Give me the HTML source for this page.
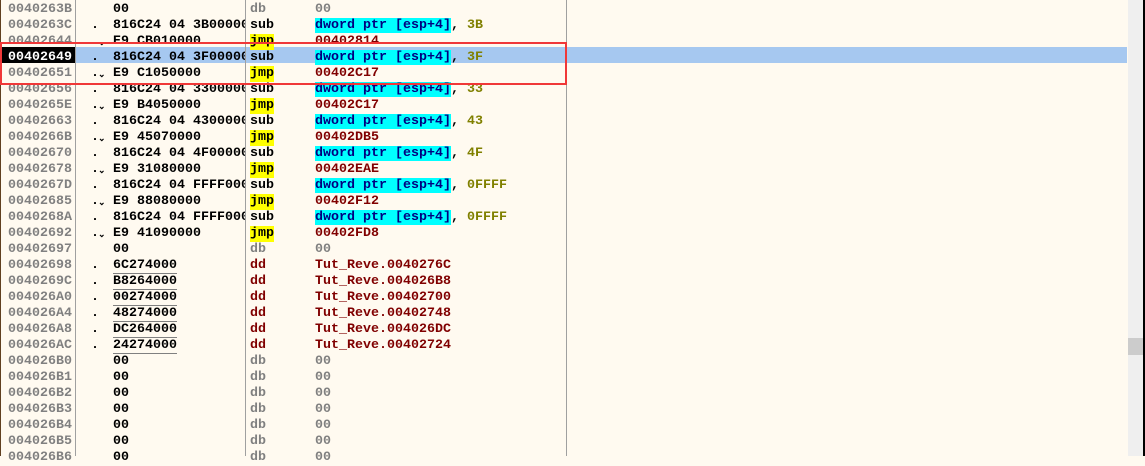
<!DOCTYPE html><html><head><meta charset="utf-8"><style>
body{margin:0;width:1145px;height:456px;overflow:hidden;background:#FFFAF0;position:relative;font:bold 13.33px "Liberation Mono",monospace;}
.r{position:absolute;left:0;width:1127px;height:16px;line-height:16px;white-space:pre}
.r span{position:absolute;top:3px}
.a{left:8px;color:#808080}
.d{left:91px;color:#000}
.d i{font-style:normal;font-size:9px;position:relative;left:-1px;top:1px}
.h{left:113px;color:#000;width:132px;overflow:hidden}
.m{left:250px;color:#000}
.o{left:315px;color:#000}
.g{color:#808080!important}
.y{background:#FFFF00}
.c{background:#00FFFF;color:#000080}
.ol{color:#808000}
.dr{color:#800000!important}
.u{border-bottom:1px solid #808080;display:inline-block;line-height:14px}
.v{position:absolute;top:0;width:1px;height:456px;background:#a0a0a0}
</style></head><body>
<div style="position:absolute;left:0;top:47px;width:1127px;height:16px;background:#A6C8F0"></div>
<div style="position:absolute;left:0;top:47px;width:75px;height:16px;background:#000"></div>
<div class="v" style="left:75px"></div><div class="v" style="left:245px"></div><div class="v" style="left:566px"></div>
<div style="position:absolute;left:0;top:0;width:1px;height:456px;background:#604020"></div>
<div style="position:absolute;left:1128px;top:0;width:15px;height:456px;background:#EFEFEF"></div>
<div style="position:absolute;left:1128px;top:338px;width:15px;height:17px;background:#CCCCCC"></div>
<div style="position:absolute;left:1143px;top:0;width:2px;height:456px;background:#000"></div>

<div class="r" style="top:-1px"><span class="a">0040263B</span><span class="h">00</span><span class="m g">db</span><span class="o g">00</span></div>
<div class="r" style="top:15px"><span class="a">0040263C</span><span class="d">.</span><span class="h">816C24 04 3B000000</span><span class="m">sub</span><span class="o"><b class="c">dword ptr [esp+4]</b>, <b class="ol">3B</b></span></div>
<div class="r" style="top:31px"><span class="a">00402644</span><span class="d">.<i>⌄</i></span><span class="h">E9 CB010000</span><span class="m y">jmp</span><span class="o dr">00402814</span></div>
<div class="r" style="top:47px"><span class="a" style="color:#fff">00402649</span><span class="d">.</span><span class="h">816C24 04 3F000000</span><span class="m">sub</span><span class="o"><b class="c">dword ptr [esp+4]</b>, <b class="ol">3F</b></span></div>
<div class="r" style="top:63px"><span class="a">00402651</span><span class="d">.<i>⌄</i></span><span class="h">E9 C1050000</span><span class="m y">jmp</span><span class="o dr">00402C17</span></div>
<div class="r" style="top:79px"><span class="a">00402656</span><span class="d">.</span><span class="h">816C24 04 33000000</span><span class="m">sub</span><span class="o"><b class="c">dword ptr [esp+4]</b>, <b class="ol">33</b></span></div>
<div class="r" style="top:95px"><span class="a">0040265E</span><span class="d">.<i>⌄</i></span><span class="h">E9 B4050000</span><span class="m y">jmp</span><span class="o dr">00402C17</span></div>
<div class="r" style="top:111px"><span class="a">00402663</span><span class="d">.</span><span class="h">816C24 04 43000000</span><span class="m">sub</span><span class="o"><b class="c">dword ptr [esp+4]</b>, <b class="ol">43</b></span></div>
<div class="r" style="top:127px"><span class="a">0040266B</span><span class="d">.<i>⌄</i></span><span class="h">E9 45070000</span><span class="m y">jmp</span><span class="o dr">00402DB5</span></div>
<div class="r" style="top:143px"><span class="a">00402670</span><span class="d">.</span><span class="h">816C24 04 4F000000</span><span class="m">sub</span><span class="o"><b class="c">dword ptr [esp+4]</b>, <b class="ol">4F</b></span></div>
<div class="r" style="top:159px"><span class="a">00402678</span><span class="d">.<i>⌄</i></span><span class="h">E9 31080000</span><span class="m y">jmp</span><span class="o dr">00402EAE</span></div>
<div class="r" style="top:175px"><span class="a">0040267D</span><span class="d">.</span><span class="h">816C24 04 FFFF0000</span><span class="m">sub</span><span class="o"><b class="c">dword ptr [esp+4]</b>, <b class="ol">0FFFF</b></span></div>
<div class="r" style="top:191px"><span class="a">00402685</span><span class="d">.<i>⌄</i></span><span class="h">E9 88080000</span><span class="m y">jmp</span><span class="o dr">00402F12</span></div>
<div class="r" style="top:207px"><span class="a">0040268A</span><span class="d">.</span><span class="h">816C24 04 FFFF0000</span><span class="m">sub</span><span class="o"><b class="c">dword ptr [esp+4]</b>, <b class="ol">0FFFF</b></span></div>
<div class="r" style="top:223px"><span class="a">00402692</span><span class="d">.<i>⌄</i></span><span class="h">E9 41090000</span><span class="m y">jmp</span><span class="o dr">00402FD8</span></div>
<div class="r" style="top:239px"><span class="a">00402697</span><span class="h">00</span><span class="m g">db</span><span class="o g">00</span></div>
<div class="r" style="top:255px"><span class="a">00402698</span><span class="d">.</span><span class="h"><b class="u">6C274000</b></span><span class="m dr">dd</span><span class="o dr">Tut_Reve.0040276C</span></div>
<div class="r" style="top:271px"><span class="a">0040269C</span><span class="d">.</span><span class="h"><b class="u">B8264000</b></span><span class="m dr">dd</span><span class="o dr">Tut_Reve.004026B8</span></div>
<div class="r" style="top:287px"><span class="a">004026A0</span><span class="d">.</span><span class="h"><b class="u">00274000</b></span><span class="m dr">dd</span><span class="o dr">Tut_Reve.00402700</span></div>
<div class="r" style="top:303px"><span class="a">004026A4</span><span class="d">.</span><span class="h"><b class="u">48274000</b></span><span class="m dr">dd</span><span class="o dr">Tut_Reve.00402748</span></div>
<div class="r" style="top:319px"><span class="a">004026A8</span><span class="d">.</span><span class="h"><b class="u">DC264000</b></span><span class="m dr">dd</span><span class="o dr">Tut_Reve.004026DC</span></div>
<div class="r" style="top:335px"><span class="a">004026AC</span><span class="d">.</span><span class="h"><b class="u">24274000</b></span><span class="m dr">dd</span><span class="o dr">Tut_Reve.00402724</span></div>
<div class="r" style="top:351px"><span class="a">004026B0</span><span class="h">00</span><span class="m g">db</span><span class="o g">00</span></div>
<div class="r" style="top:367px"><span class="a">004026B1</span><span class="h">00</span><span class="m g">db</span><span class="o g">00</span></div>
<div class="r" style="top:383px"><span class="a">004026B2</span><span class="h">00</span><span class="m g">db</span><span class="o g">00</span></div>
<div class="r" style="top:399px"><span class="a">004026B3</span><span class="h">00</span><span class="m g">db</span><span class="o g">00</span></div>
<div class="r" style="top:415px"><span class="a">004026B4</span><span class="h">00</span><span class="m g">db</span><span class="o g">00</span></div>
<div class="r" style="top:431px"><span class="a">004026B5</span><span class="h">00</span><span class="m g">db</span><span class="o g">00</span></div>
<div class="r" style="top:447px"><span class="a">004026B6</span><span class="h">00</span><span class="m g">db</span><span class="o g">00</span></div>

<div style="position:absolute;left:0;top:42px;width:563px;height:39px;border:2px solid #F03838"></div>
</body></html>
